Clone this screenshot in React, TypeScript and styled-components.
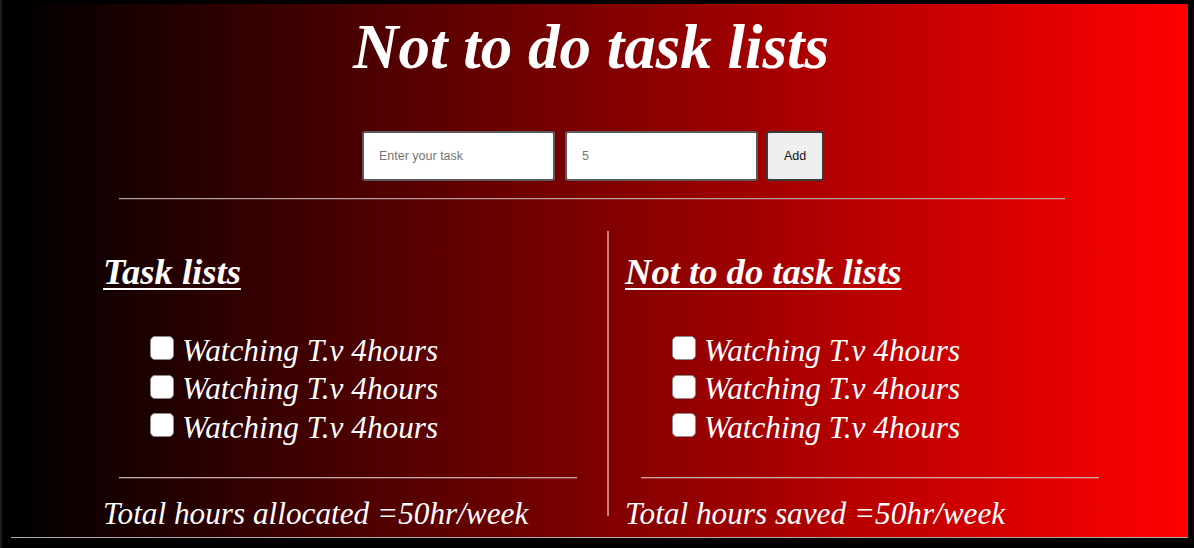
import React from "react";
import styled, { createGlobalStyle } from "styled-components";

const Global = createGlobalStyle`
  html, body { margin: 0; padding: 0; background: #000; }
  body {
    border-left: 2px solid #1c1c1c;
    height: 548px;
    overflow: hidden;
    font-family: "Liberation Serif", "Times New Roman", serif;
  }
`;

const Page = styled.div`
  margin: 4px 6px 0 9px;
  height: 533px;
  border-bottom: 1px solid #b0a8a8;
  background: linear-gradient(to right, #000 0%, #ff0000 100%);
  color: #fff;
  overflow: hidden;
  display: flex;
  flex-direction: column;
  align-items: stretch;
`;

const Title = styled.h1`
  margin: 6.7px 0 0;
  padding-right: 17px;
  text-align: center;
  font-size: 63px;
  font-weight: bold;
  font-style: italic;
  line-height: 72px;
`;

const Form = styled.form`
  margin-top: 48px;
  padding-right: 13px;
  display: flex;
  justify-content: center;
  gap: 10px;
`;

const Field = styled.input`
  box-sizing: border-box;
  width: 193px;
  height: 50px;
  padding: 0 15px;
  border: 2px solid #5a5a5a;
  border-radius: 3px;
  background: #fff;
  font-family: "Liberation Sans", Arial, sans-serif;
  font-size: 12.5px;
  color: #222;
  &::placeholder { color: #757575; }
`;

const AddButton = styled.button`
  box-sizing: border-box;
  width: 58px;
  height: 50px;
  margin-left: -2px;
  border: 2px solid #3a3a3a;
  border-radius: 3px;
  background: #efefef;
  font-family: "Liberation Sans", Arial, sans-serif;
  font-size: 12.5px;
  color: #111;
`;

const Rule = styled.hr`
  box-sizing: border-box;
  margin: 17px 0 0 108px;
  width: 946px;
  height: 2px;
  border: none;
  border-top: 1px solid #b9a0a0;
  border-bottom: 1px solid rgba(255,255,255,0.15);
`;

const Columns = styled.div`
  margin-top: 31px;
  margin-left: 92px;
  display: flex;
  align-items: flex-start;
`;

const Column = styled.section<{ $right?: boolean }>`
  box-sizing: border-box;
  width: ${(p) => (p.$right ? "505px" : "506px")};
  padding-left: ${(p) => (p.$right ? "16px" : "0")};
  padding-right: ${(p) => (p.$right ? "0" : "15px")};
  height: 285px;
  border-right: ${(p) => (p.$right ? "none" : "2px solid rgba(220, 170, 170, 0.75)")};
  overflow: visible;
`;

const Heading = styled.h2`
  margin: 20px 0 0;
  font-size: 36.6px;
  font-weight: bold;
  font-style: italic;
  text-decoration: underline;
  text-decoration-thickness: 2px;
  text-underline-offset: 4px;
  line-height: 42px;
`;

const List = styled.ul`
  list-style: none;
  margin: 39.2px 0 0;
  padding: 0 0 0 44px;
`;

const Item = styled.li`
  display: flex;
  align-items: center;
  height: 38.5px;
  font-size: 31.25px;
  font-style: italic;
  line-height: 38.5px;
`;

const Check = styled.input`
  appearance: none;
  box-sizing: border-box;
  width: 24px;
  height: 24px;
  margin: 0 8px 0 3px;
  border: 1.5px solid #8a8a8a;
  border-radius: 5px;
  background: #fff;
  position: relative;
  top: -3px;
`;

const SubRule = styled.hr`
  box-sizing: border-box;
  margin: 30px 0 0 16px;
  width: 458px;
  height: 2px;
  border: none;
  border-top: 1px solid #c8a8a8;
  border-bottom: 1px solid rgba(255,255,255,0.2);
`;

const Total = styled.p`
  margin: 16.3px 0 0;
  font-size: 31.25px;
  font-style: italic;
  line-height: 35px;
  white-space: nowrap;
`;

const items = ["Watching T.v 4hours", "Watching T.v 4hours", "Watching T.v 4hours"];

export default function App() {
  return (
    <>
      <Global />
      <Page>
        <Title>Not to do task lists</Title>
        <Form onSubmit={(e) => e.preventDefault()}>
          <Field type="text" placeholder="Enter your task" />
          <Field type="number" placeholder="5" />
          <AddButton type="submit">Add</AddButton>
        </Form>
        <Rule />
        <Columns>
          <Column>
            <Heading>Task lists</Heading>
            <List>
              {items.map((t, i) => (
                <Item key={i}>
                  <Check type="checkbox" />
                  {t}
                </Item>
              ))}
            </List>
            <SubRule />
            <Total>Total hours allocated =50hr/week</Total>
          </Column>
          <Column $right>
            <Heading>Not to do task lists</Heading>
            <List>
              {items.map((t, i) => (
                <Item key={i}>
                  <Check type="checkbox" />
                  {t}
                </Item>
              ))}
            </List>
            <SubRule />
            <Total>Total hours saved =50hr/week</Total>
          </Column>
        </Columns>
      </Page>
    </>
  );
}
